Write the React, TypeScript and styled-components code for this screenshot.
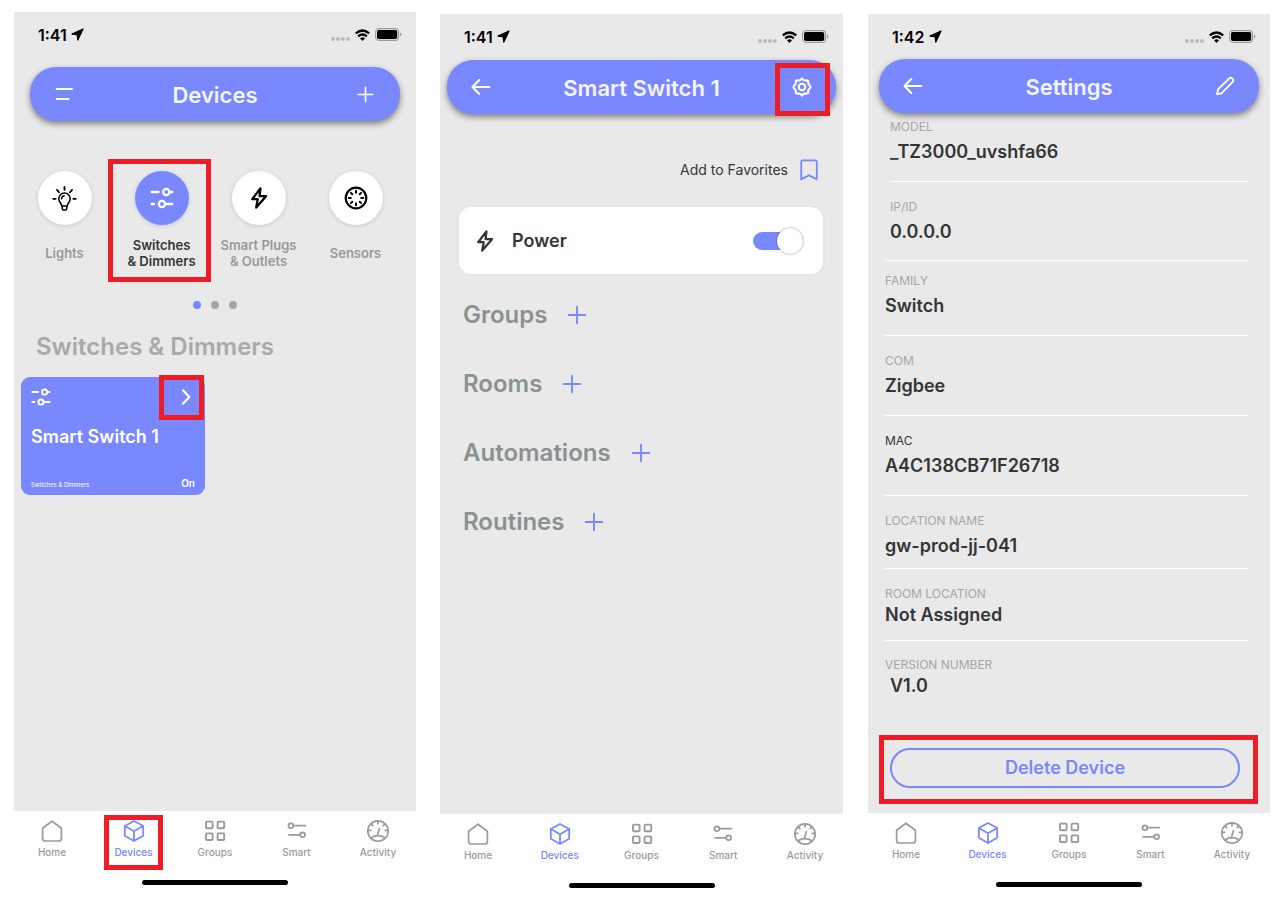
import React from "react";
import styled, { createGlobalStyle } from "styled-components";

const accent = "#7988ff";
const screenGray = "#e9e9e9";
const marker = "#ee1c24";

const GlobalStyle = createGlobalStyle`
  * { box-sizing: border-box; }
  body {
    margin: 0;
    background: #ffffff;
    font-family: Inter, "Liberation Sans", sans-serif;
    color: #333638;
  }
  button {
    font: inherit;
    color: inherit;
    background: none;
    border: 0;
    padding: 0;
    cursor: pointer;
  }
  h1, h2, h3, p, dl, dt, dd { margin: 0; }
  svg { display: block; flex: none; }
`;

const Board = styled.div`
  display: grid;
  grid-template-columns: minmax(0, 402fr) minmax(0, 403fr) minmax(0, 403fr);
  column-gap: 24px;
  align-items: start;
  padding: 12px 15px 12px 14px;
`;

const Phone = styled.section<{ $drop?: number; $indent?: number }>`
  margin-top: ${(p) => p.$drop ?? 0}px;
  margin-left: ${(p) => p.$indent ?? 0}px;
`;

const Screen = styled.main<{ $chrome?: number }>`
  display: flex;
  flex-direction: column;
  min-height: calc(100vh - ${(p) => p.$chrome ?? 108}px);
  background: ${screenGray};
`;

const Status = styled.div<{ $height: number }>`
  display: flex;
  justify-content: space-between;
  align-items: center;
  height: ${(p) => p.$height}px;
  padding: 0 14px ${(p) => p.$height - 45}px 24px;
  color: #000000;
`;

const Clock = styled.span`
  display: flex;
  align-items: center;
  gap: 4px;
  font-size: 16px;
  line-height: 20px;
  font-weight: 600;
`;

const StatusIcons = styled.span`
  display: flex;
  align-items: center;
  gap: 5px;
`;

const Header = styled.header<{ $side: number }>`
  display: flex;
  align-items: center;
  justify-content: space-between;
  height: 54px;
  margin: 0 ${(p) => p.$side}px;
  padding: 0 22px;
  border-radius: 26px;
  background: ${accent};
  color: #ffffff;
  box-shadow: 0 3px 6px rgba(0, 0, 0, 0.45);
`;

const Title = styled.h1`
  padding-top: 2px;
  font-size: 22px;
  line-height: 28px;
  font-weight: 600;
  color: #f4f5ff;
`;

const IconButton = styled.button`
  position: relative;
  display: grid;
  place-items: center;
  width: 24px;
  height: 24px;
`;

const Highlight = styled.span<{ $inset: string }>`
  position: absolute;
  inset: ${(p) => p.$inset};
  border: 5px solid ${marker};
  pointer-events: none;
`;

const Categories = styled.div`
  display: grid;
  grid-template-columns: repeat(4, 1fr);
  padding: 50px 12px 0 2px;
`;

const Category = styled.button<{ $active?: boolean }>`
  position: relative;
  display: flex;
  flex-direction: column;
  align-items: center;
  gap: 12px;
  color: ${(p) => (p.$active ? "#333638" : "#999999")};
`;

const Disc = styled.span<{ $active?: boolean }>`
  display: grid;
  place-items: center;
  width: 54px;
  height: 54px;
  border-radius: 50%;
  background: ${(p) => (p.$active ? accent : "#ffffff")};
  color: ${(p) => (p.$active ? "#ffffff" : "#000000")};
  box-shadow: 0 1px 4px rgba(0, 0, 0, 0.14);
`;

const CategoryLabel = styled.span`
  display: grid;
  align-items: center;
  height: 32px;
  font-size: 13px;
  line-height: 16px;
  font-weight: 600;
  white-space: pre;
  text-align: center;
`;

const Pager = styled.div`
  display: flex;
  justify-content: center;
  gap: 10px;
  margin-top: 32px;
`;

const Dot = styled.button<{ $active?: boolean }>`
  width: 8px;
  height: 8px;
  border-radius: 50%;
  background: ${(p) => (p.$active ? accent : "#a6a6a6")};
`;

const ListHeading = styled.h2`
  margin: 22px 0 14px 22px;
  font-size: 24px;
  line-height: 32px;
  font-weight: 600;
  color: #a9a9a9;
`;

const DeviceCard = styled.article`
  display: flex;
  flex-direction: column;
  width: 184px;
  height: 118px;
  margin-left: 7px;
  padding: 10px 10px 4px;
  border-radius: 9px;
  background: ${accent};
  color: #ffffff;
`;

const CardRow = styled.div`
  display: flex;
  align-items: center;
  justify-content: space-between;
`;

const CardButton = styled(IconButton)`
  width: 20px;
  height: 20px;
`;

const DeviceName = styled.h3`
  margin: 18px 0 auto;
  font-size: 18px;
  line-height: 24px;
  font-weight: 600;
`;

const DeviceType = styled.span`
  padding-top: 3px;
  font-size: 6px;
  line-height: 12px;
`;

const DeviceState = styled.span`
  font-size: 10px;
  line-height: 16px;
  font-weight: 600;
`;

const Favorite = styled.button`
  display: flex;
  align-items: center;
  align-self: flex-end;
  gap: 9px;
  margin: 44px 22px 0 0;
  font-size: 14px;
  line-height: 24px;

  svg { color: ${accent}; }
`;

const PowerCard = styled.label`
  display: flex;
  align-items: center;
  height: 67px;
  margin: 25px 20px 0 19px;
  padding: 0 20px 0 14px;
  border-radius: 12px;
  background: #ffffff;
  box-shadow: 0 0 5px rgba(0, 0, 0, 0.04);
`;

const PowerText = styled.span`
  margin: 0 auto 0 15px;
  font-size: 18px;
  line-height: 24px;
  font-weight: 600;
`;

const Toggle = styled.input`
  appearance: none;
  display: flex;
  align-items: center;
  width: 50px;
  height: 18px;
  margin: 0;
  border-radius: 9px;
  background: ${accent};
  cursor: pointer;

  &::before {
    content: "";
    width: 26px;
    height: 26px;
    flex: none;
    border-radius: 50%;
    background: #ffffff;
    box-shadow: 0 0 2px rgba(0, 0, 0, 0.55);
  }
  &:checked::before { margin-left: auto; }
  &:not(:checked) { background: #bdbdbd; }
`;

const Sections = styled.div`
  display: flex;
  flex-direction: column;
  gap: 37px;
  padding: 25px 23px;
`;

const SectionRow = styled.div`
  display: flex;
  align-items: center;
  gap: 18px;
  color: ${accent};
`;

const SectionTitle = styled.h2`
  font-size: 24px;
  line-height: 32px;
  font-weight: 600;
  color: #8a9193;
`;

const Fields = styled.dl`
  padding: 0 22px 0 17px;
`;

const Field = styled.div<{ $top: number; $bottom: number; $inset?: boolean; $last?: boolean }>`
  margin-left: ${(p) => (p.$inset ? 5 : 0)}px;
  padding: ${(p) => p.$top}px 0 ${(p) => p.$bottom}px;
  border-bottom: ${(p) => (p.$last ? 0 : 1)}px solid #ffffff;
`;

const FieldLabel = styled.dt<{ $dark?: boolean; $indent?: boolean }>`
  padding-left: ${(p) => (p.$indent ? 5 : 0)}px;
  font-size: 12px;
  line-height: 16px;
  color: ${(p) => (p.$dark ? "#333638" : "#a6a6a6")};
`;

const FieldValue = styled.dd<{ $gap: number; $indent?: boolean }>`
  padding: ${(p) => p.$gap}px 0 0 ${(p) => (p.$indent ? 5 : 0)}px;
  font-size: 18px;
  line-height: 22px;
  font-weight: 600;
`;

const DeleteButton = styled.button`
  position: relative;
  height: 40px;
  margin: 51px 30px 25px 22px;
  border: 2px solid ${accent};
  border-radius: 20px;
  font-size: 18px;
  line-height: 24px;
  font-weight: 600;
  color: ${accent};
`;

const TabBar = styled.nav`
  display: flex;
  justify-content: space-between;
  height: 69px;
  padding: 8px 9px 0;
`;

const Tab = styled.a<{ $active?: boolean }>`
  position: relative;
  display: flex;
  flex-direction: column;
  align-items: center;
  gap: 2px;
  width: 58px;
  height: 42px;
  font-size: 10px;
  line-height: 14px;
  font-weight: 500;
  text-decoration: none;
  color: ${(p) => (p.$active ? accent : "#9b9b9b")};
`;

const HomeIndicator = styled.div`
  width: 146px;
  height: 5px;
  margin: 0 auto;
  border-radius: 3px;
  background: #000000;
`;

type IconProps = { size?: number; width?: number; children: React.ReactNode };

const Icon = ({ size = 24, width = 2, children }: IconProps) => (
  <svg
    width={size}
    height={size}
    viewBox="0 0 24 24"
    fill="none"
    stroke="currentColor"
    strokeWidth={width}
    strokeLinecap="round"
    strokeLinejoin="round"
    aria-hidden="true"
  >
    {children}
  </svg>
);

const PlusIcon = ({ size = 24 }: { size?: number }) => (
  <Icon size={size} width={1.9}><path d="M12 3.7v16.6M3.7 12h16.6" /></Icon>
);
const BackIcon = () => (
  <Icon><path d="M20.5 12H3.5M10.3 5 3.5 12l6.8 7" /></Icon>
);
const MenuIcon = () => (
  <Icon><path d="M4.8 7H20M4.8 17H16.5" /></Icon>
);
const GearIcon = () => (
  <Icon width={2.1}>
    <path d="M12 3.4Q13.5 5.4 14.6 5.5Q16.8 5.2 18.1 5.9Q18.2 8.2 18.6 9.3Q20.6 11 20.6 12Q20.6 13 18.6 14.7Q18.2 15.8 18.1 18.1Q16.8 18.8 14.6 18.5Q13.5 18.6 12 20.6Q10.5 18.6 9.4 18.5Q7.2 18.8 5.9 18.1Q5.8 15.8 5.4 14.7Q3.4 13 3.4 12Q3.4 11 5.4 9.3Q5.8 8.2 5.9 5.9Q7.2 5.2 9.4 5.5Q10.5 5.4 12 3.4Z" />
    <circle cx="12" cy="12" r="3.3" />
  </Icon>
);
const PencilIcon = () => (
  <Icon width={1.9}>
    <path d="M4.2 20.2 5 15.4 16 4.7a2.4 2.4 0 0 1 3.5 3.4L8.7 19.2Z" />
  </Icon>
);
const SlidersIcon = ({ size = 24 }: { size?: number }) => (
  <Icon size={size} width={2.3}>
    <path d="M1.6 6H8.6M20.4 6h2M1.6 18h2.4M15.6 18h6.8" />
    <circle cx="16.3" cy="6" r="3.1" />
    <circle cx="12" cy="18" r="3.1" />
  </Icon>
);
const BoltIcon = () => (
  <Icon width={2.3}>
    <path d="M13.4 2.4 5.2 13.2h5.5L9.2 21.6 19 10.2h-6.4Z" />
  </Icon>
);
const BulbIcon = () => (
  <Icon size={25} width={1.5}>
    <path d="M12 1v2.6M4.8 3.8 6.7 6M19.2 3.8 17.3 6M1.2 12.3h2.3M20.5 12.3h2.3" strokeWidth="1.8" />
    <path d="M9.4 19.2c0-2.4-2.9-3.6-2.9-6.9a5.5 5.5 0 0 1 11 0c0 3.3-2.9 4.5-2.9 6.9Z" />
    <path d="M9.6 19.5 10 22.2q.2.9 1 .9h2q.8 0 1-.9l.4-2.7M9.2 12.1q.1-2.2 2.4-2.7" />
  </Icon>
);
const SensorIcon = () => (
  <Icon width={2}>
    <circle cx="12" cy="12" r="10.3" strokeWidth="2.2" />
    <path d="M12 4.8v2M12 17.2v2M4.8 12h2M17.2 12h2M6.9 6.9l1.4 1.4M15.7 15.7l1.4 1.4M17.1 6.9l-1.4 1.4M8.3 15.7l-1.4 1.4" />
  </Icon>
);
const ChevronIcon = () => (
  <Icon size={20} width={2.6}><path d="m9.6 4 7.6 8-7.6 8" /></Icon>
);
const BookmarkIcon = () => (
  <Icon width={1.8}>
    <path d="M6 2.4h12q1.8 0 1.8 1.8v17.2L12 17.2l-7.8 4.2V4.2Q4.2 2.4 6 2.4Z" />
  </Icon>
);
const HomeIcon = () => (
  <Icon width={1.7}>
    <path d="M2.6 9.2 12 2.2l9.4 7v10.2q0 2.6-2.6 2.6H5.2q-2.6 0-2.6-2.6Z" />
  </Icon>
);
const CubeIcon = () => (
  <Icon width={1.8}>
    <path d="M12 2 21.2 7v9.8L12 22 2.8 16.8V7ZM2.8 7l9.2 5.2L21.2 7M12 12.2V22" />
  </Icon>
);
const GridIcon = () => (
  <Icon width={1.9}>
    <rect x="3" y="2.6" width="6.6" height="6.6" rx="1" />
    <rect x="14.6" y="2.6" width="6.6" height="6.6" rx="1" />
    <rect x="3" y="14.4" width="6.6" height="6.6" rx="1" />
    <rect x="14.6" y="14.4" width="6.6" height="6.6" rx="1" />
  </Icon>
);
const SmartIcon = () => (
  <Icon width={1.8}>
    <path d="M8.6 6.7h11.6M4 15.8h10.6" />
    <circle cx="5.9" cy="6.7" r="2.4" />
    <circle cx="17.6" cy="15.8" r="2.4" />
  </Icon>
);
const GaugeIcon = () => (
  <Icon width={1.7}>
    <circle cx="12" cy="12" r="10.2" />
    <path d="M4.8 19q7.2-4.6 14.4 0M11.5 16.2 13.4 9.6M12 2.4v2.3M2.4 11.4h2.2M19.4 11.4h2.2M5.3 5.1l1.5 1.6M18.7 5.1l-1.5 1.6" />
  </Icon>
);

const StatusBar = ({ time, height }: { time: string; height: number }) => (
  <Status $height={height}>
    <Clock>
      {time}
      <svg width="13" height="13" viewBox="0 0 13 13" aria-hidden="true">
        <path
          d="M12 1 1 6l5.2.7.6 5.3Z"
          fill="#000000"
          stroke="#000000"
          strokeWidth="1.3"
          strokeLinejoin="round"
        />
      </svg>
    </Clock>
    <StatusIcons>
      <svg width="19" height="12" viewBox="0 0 19 12" aria-hidden="true">
        <g fill="#b9b9b9">
          <circle cx="2" cy="10" r="1.9" />
          <circle cx="7" cy="10" r="1.9" />
          <circle cx="12" cy="10" r="1.9" />
          <circle cx="17" cy="10" r="1.9" />
        </g>
      </svg>
      <svg width="15" height="12" viewBox="0 0 15 12" fill="none" stroke="#000000" strokeWidth="2.3" aria-hidden="true">
        <path d="M.8 4.4q6.7-5.8 13.4 0M3.2 7.3q4.3-3.5 8.6 0" />
        <path d="M5 9.3q2.5-1.9 5 0L7.5 12Z" fill="#000000" stroke="none" />
      </svg>
      <svg width="27" height="13" viewBox="0 0 27 13" aria-hidden="true">
        <rect x=".6" y=".6" width="23" height="11.8" rx="3.4" fill="none" stroke="#9c9c9c" strokeWidth="1.1" />
        <rect x="2" y="2" width="20.2" height="9" rx="1.8" fill="#000000" />
        <path d="M25 4.5q1.4.5 1.4 2T25 8.5Z" fill="#9c9c9c" />
      </svg>
    </StatusIcons>
  </Status>
);

const tabs = [
  { label: "Home", icon: <HomeIcon /> },
  { label: "Devices", icon: <CubeIcon /> },
  { label: "Groups", icon: <GridIcon /> },
  { label: "Smart", icon: <SmartIcon /> },
  { label: "Activity", icon: <GaugeIcon /> },
];

const BottomBar = ({ marked }: { marked?: boolean }) => (
  <>
    <TabBar>
      {tabs.map(({ label, icon }) => {
        const active = label === "Devices";
        return (
          <Tab key={label} href={`#${label.toLowerCase()}`} $active={active}>
            {icon}
            {label}
            {active && marked && <Highlight $inset="-4px 0 -9px -1px" />}
          </Tab>
        );
      })}
    </TabBar>
    <HomeIndicator />
  </>
);

const categories = [
  { label: "Lights", icon: <BulbIcon /> },
  { label: "Switches\n& Dimmers", icon: <SlidersIcon />, active: true },
  { label: "Smart Plugs\n& Outlets", icon: <BoltIcon /> },
  { label: "Sensors", icon: <SensorIcon /> },
];

const fields = [
  { label: "MODEL", value: "_TZ3000_uvshfa66", top: 6, gap: 6, bottom: 18, inset: true },
  { label: "IP/ID", value: "0.0.0.0", top: 17, gap: 6, bottom: 17, indentLabel: true, indentValue: true },
  { label: "FAMILY", value: "Switch", top: 12, gap: 6, bottom: 18 },
  { label: "COM", value: "Zigbee", top: 17, gap: 6, bottom: 18 },
  { label: "MAC", value: "A4C138CB71F26718", top: 17, gap: 6, bottom: 18, dark: true },
  { label: "LOCATION NAME", value: "gw-prod-jj-041", top: 17, gap: 6, bottom: 11 },
  { label: "ROOM LOCATION", value: "Not Assigned", top: 17, gap: 2, bottom: 14 },
  { label: "VERSION NUMBER", value: "V1.0", top: 16, gap: 2, bottom: 0, indentValue: true },
];

const DevicesPhone = () => (
  <Phone>
    <Screen>
      <StatusBar time="1:41" height={55} />
      <Header $side={16}>
        <IconButton aria-label="Menu"><MenuIcon /></IconButton>
        <Title>Devices</Title>
        <IconButton aria-label="Add device"><PlusIcon size={21} /></IconButton>
      </Header>
      <Categories>
        {categories.map(({ label, icon, active }) => (
          <Category key={label} $active={active}>
            <Disc $active={active}>{icon}</Disc>
            <CategoryLabel>{label}</CategoryLabel>
            {active && <Highlight $inset="-12px -1px -13px -5px" />}
          </Category>
        ))}
      </Categories>
      <Pager>
        <Dot $active aria-label="Page 1" />
        <Dot aria-label="Page 2" />
        <Dot aria-label="Page 3" />
      </Pager>
      <ListHeading>Switches &amp; Dimmers</ListHeading>
      <DeviceCard>
        <CardRow>
          <SlidersIcon size={20} />
          <CardButton aria-label="Open Smart Switch 1">
            <ChevronIcon />
            <Highlight $inset="-12px -9px -13px -16px" />
          </CardButton>
        </CardRow>
        <DeviceName>Smart Switch 1</DeviceName>
        <CardRow>
          <DeviceType>Switches &amp; Dimmers</DeviceType>
          <DeviceState>On</DeviceState>
        </CardRow>
      </DeviceCard>
    </Screen>
    <BottomBar marked />
  </Phone>
);

const SwitchPhone = () => (
  <Phone $drop={2}>
    <Screen $chrome={107}>
      <StatusBar time="1:41" height={46} />
      <Header $side={7}>
        <IconButton aria-label="Back"><BackIcon /></IconButton>
        <Title>Smart Switch 1</Title>
        <IconButton aria-label="Settings">
          <GearIcon />
          <Highlight $inset="-12px -16px -17px -15px" />
        </IconButton>
      </Header>
      <Favorite>
        Add to Favorites
        <BookmarkIcon />
      </Favorite>
      <PowerCard>
        <BoltIcon />
        <PowerText>Power</PowerText>
        <Toggle type="checkbox" role="switch" defaultChecked />
      </PowerCard>
      <Sections>
        {["Groups", "Rooms", "Automations", "Routines"].map((name) => (
          <SectionRow key={name}>
            <SectionTitle>{name}</SectionTitle>
            <IconButton aria-label={`Add to ${name}`}><PlusIcon /></IconButton>
          </SectionRow>
        ))}
      </Sections>
    </Screen>
    <BottomBar />
  </Phone>
);

const SettingsPhone = () => (
  <Phone $drop={2} $indent={1}>
    <Screen>
      <StatusBar time="1:42" height={45} />
      <Header $side={11}>
        <IconButton aria-label="Back"><BackIcon /></IconButton>
        <Title>Settings</Title>
        <IconButton aria-label="Edit"><PencilIcon /></IconButton>
      </Header>
      <Fields>
        {fields.map((f, i) => (
          <Field key={f.label} $top={f.top} $bottom={f.bottom} $inset={f.inset} $last={i === fields.length - 1}>
            <FieldLabel $dark={f.dark} $indent={f.indentLabel}>{f.label}</FieldLabel>
            <FieldValue $gap={f.gap} $indent={f.indentValue}>{f.value}</FieldValue>
          </Field>
        ))}
      </Fields>
      <DeleteButton>
        Delete Device
        <Highlight $inset="-15px -20px -18px -13px" />
      </DeleteButton>
    </Screen>
    <BottomBar />
  </Phone>
);

export default function App() {
  return (
    <>
      <GlobalStyle />
      <Board>
        <DevicesPhone />
        <SwitchPhone />
        <SettingsPhone />
      </Board>
    </>
  );
}
